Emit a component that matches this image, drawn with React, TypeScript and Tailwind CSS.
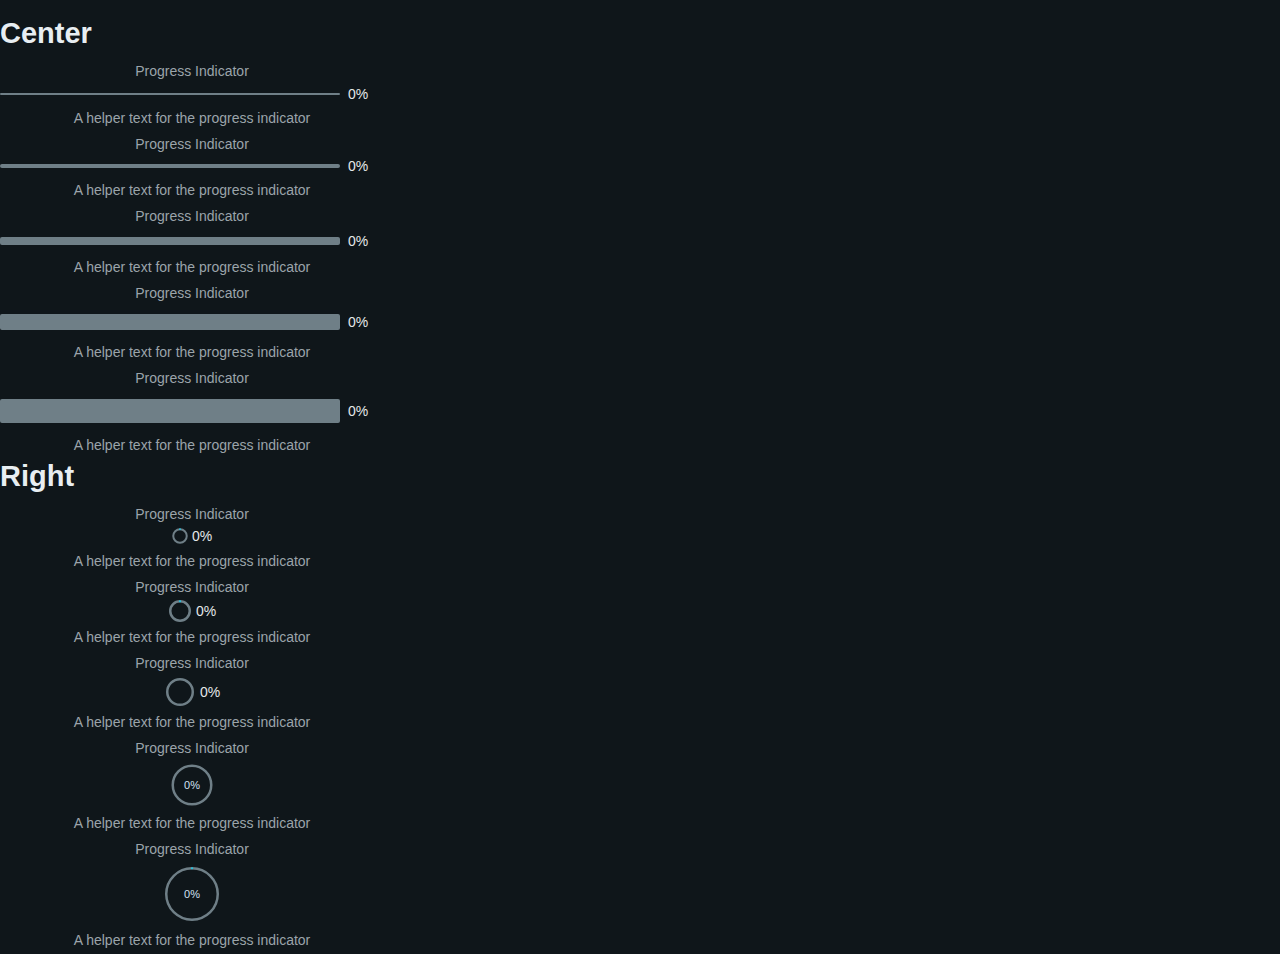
import React from "react";

const LABEL = "Progress Indicator";
const HELPER = "A helper text for the progress indicator";

function LinearSet({ h }: { h: number }) {
  return (
    <div className="flex flex-col">
      <div className="h-5 text-center text-sm leading-5 text-[#9ba4aa]">{LABEL}</div>
      <div className="flex min-h-5 items-center gap-2" style={{ marginTop: h === 4 ? 2 : 3 }}>
        <div className="my-2 flex-1 rounded-[2px] bg-[#6f7f87]" style={{ height: h }} />
        <div className="w-9 text-sm leading-5 text-[#e4e8ea]">0%</div>
      </div>
      <div className="mt-1 h-5 text-center text-sm leading-5 text-[#9ba4aa]">{HELPER}</div>
    </div>
  );
}

function Ring({ size, r, sw, dot }: { size: number; r: number; sw: number; dot: boolean }) {
  const c = size / 2;
  return (
    <svg width={size} height={size} viewBox={`0 0 ${size} ${size}`} className="block shrink-0">
      <circle cx={c} cy={c} r={r} fill="none" stroke="#6f7f87" strokeWidth={sw} />
      {dot && <circle cx={c} cy={c - r} r={sw * 0.45} fill="#22c3e0" />}
    </svg>
  );
}

function CircleInlineSet({
  size,
  r,
  sw,
  dot,
  rowGap,
  helperGap,
}: {
  size: number;
  r: number;
  sw: number;
  dot: boolean;
  rowGap: number;
  helperGap: number;
}) {
  return (
    <div className="flex flex-col">
      <div className="h-5 text-center text-sm leading-5 text-[#9ba4aa]">{LABEL}</div>
      <div
        className="flex items-center justify-center gap-1"
        style={{ minHeight: Math.max(size, 20), marginTop: rowGap }}
      >
        <Ring size={size} r={r} sw={sw} dot={dot} />
        <span className="text-sm leading-5 text-[#e4e8ea]">0%</span>
      </div>
      <div className="h-5 text-center text-sm leading-5 text-[#9ba4aa]" style={{ marginTop: helperGap }}>
        {HELPER}
      </div>
    </div>
  );
}

function CircleInnerSet({ size, r, sw, dot }: { size: number; r: number; sw: number; dot: boolean }) {
  return (
    <div className="flex flex-col">
      <div className="h-5 text-center text-sm leading-5 text-[#9ba4aa]">{LABEL}</div>
      <div className="mt-[3px] flex justify-center">
        <div className="relative" style={{ width: size, height: size }}>
          <Ring size={size} r={r} sw={sw} dot={dot} />
          <span className="absolute inset-0 flex items-center justify-center text-[11px] leading-none text-[#cfe0f2]">
            0%
          </span>
        </div>
      </div>
      <div className="mt-1 h-5 text-center text-sm leading-5 text-[#9ba4aa]">{HELPER}</div>
    </div>
  );
}

export default function App() {
  return (
    <div
      className="min-h-[954px] w-full bg-[#0f161a]"
      style={{ fontFamily: '"Liberation Sans", Arial, sans-serif' }}
    >
      <div className="flex w-[384px] flex-col pt-[17px]">
        <h2 className="h-8 text-[29px] font-bold leading-8 text-[#e8eef2]">Center</h2>
        <div className="mt-[12px] flex flex-col gap-[6px]">
          <LinearSet h={2} />
          <LinearSet h={4} />
          <LinearSet h={8} />
          <LinearSet h={16} />
          <LinearSet h={24} />
        </div>
        <h2 className="mt-[5px] h-8 text-[29px] font-bold leading-8 text-[#e8eef2]">Right</h2>
        <div className="mt-[12px] flex flex-col gap-[6px]">
          <CircleInlineSet size={16} r={6.75} sw={2} dot rowGap={2} helperGap={5} />
          <CircleInlineSet size={24} r={9.75} sw={2.5} dot rowGap={2} helperGap={4} />
          <CircleInlineSet size={32} r={12.75} sw={2.5} dot={false} rowGap={3} helperGap={4} />
          <CircleInnerSet size={48} r={19.25} sw={2.5} dot={false} />
          <CircleInnerSet size={64} r={25.75} sw={2.5} dot />
        </div>
      </div>
    </div>
  );
}
